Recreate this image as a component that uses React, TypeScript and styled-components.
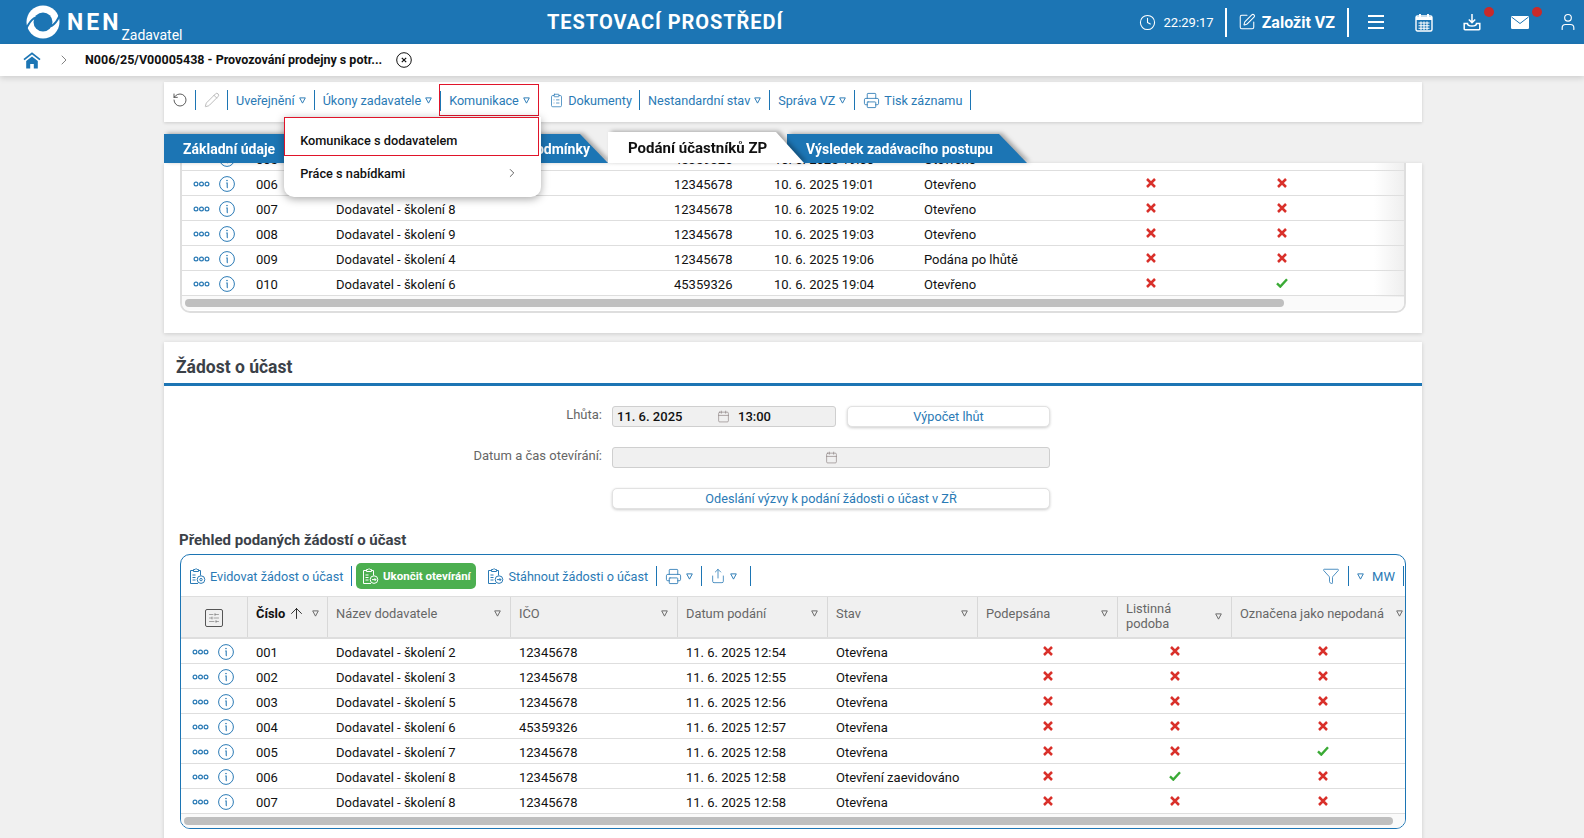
import React from 'react';
import styled, { createGlobalStyle } from 'styled-components';
import {
  ArrowUp,
  Calendar,
  ChevronRight,
  ClipboardList,
  Clock,
  Funnel,
  Pencil,
  Printer,
  RotateCcw,
  Share,
  SlidersHorizontal,
  SquarePen,
  User,
} from 'lucide-react';

const BLUE = '#1c75b4';
const LINK = '#2a7ab5';

const GlobalStyle = createGlobalStyle`
  html, body {
    margin: 0;
    padding: 0;
    height: 100%;
    overflow: hidden;
    background: #f0f0f0;
    font-family: Roboto, "Liberation Sans", sans-serif;
    font-size: 13px;
    color: #111;
  }
`;

const Page = styled.div`
  width: 1584px;
  height: 838px;
  overflow: hidden;
`;

const Header = styled.header`
  height: 44px;
  background: ${BLUE};
  color: #fff;
  display: flex;
  align-items: center;
`;

const Brand = styled.div`
  width: 547px;
  padding-left: 26px;
  box-sizing: border-box;
  display: flex;
  align-items: center;
`;

const BrandName = styled.span`
  margin-left: 7px;
  font-size: 23px;
  font-weight: 700;
  letter-spacing: 3px;
`;

const BrandRole = styled.span`
  font-size: 14px;
  margin: 25px 0 0 0;
`;

const EnvTitle = styled.div`
  font-size: 20px;
  font-weight: 700;
  letter-spacing: 0.95px;
`;

const HeaderRight = styled.div`
  margin-left: auto;
  padding-right: 4px;
  display: flex;
  align-items: center;
`;

const Time = styled.span`
  font-size: 13px;
  margin-left: 8px;
`;

const HeaderSep = styled.span<{ $side?: number }>`
  width: 2px;
  height: 29px;
  background: #fff;
  margin: 0 ${(p) => p.$side ?? 12}px;
`;

const CreateLabel = styled.span`
  font-size: 16px;
  font-weight: 700;
  margin-left: 6px;
`;

const HeaderIcons = styled.div`
  display: flex;
  gap: 24px;
  margin-left: 3px;
`;

const HeaderIcon = styled.span`
  position: relative;
  width: 24px;
  height: 24px;
  display: flex;
  align-items: center;
  justify-content: center;
`;

const Burger = styled.span`
  width: 16px;
  height: 14px;
  border-top: 2px solid #fff;
  border-bottom: 2px solid #fff;
  box-sizing: border-box;
  position: relative;
  &::after {
    content: '';
    position: absolute;
    left: 0;
    right: 0;
    top: 4px;
    height: 2px;
    background: #fff;
  }
`;

const Badge = styled.span`
  position: absolute;
  top: -3px;
  right: -10px;
  width: 10px;
  height: 10px;
  border-radius: 50%;
  background: #c92a2a;
`;

const Crumbs = styled.nav`
  position: relative;
  height: 32px;
  background: #fff;
  box-shadow: 0 2px 6px rgba(0, 0, 0, 0.15);
  display: flex;
  align-items: center;
  padding-left: 23px;
`;

const CrumbChevron = styled(ChevronRight)`
  margin-left: 15px;
`;

const CrumbText = styled.span`
  font-weight: 700;
  font-size: 12.5px;
  margin: 0 14px 2px 13px;
  color: #111;
`;

const Main = styled.main`
  width: 1258px;
  margin: 6px 0 0 164px;
`;

const ToolbarCard = styled.div`
  height: 40px;
  box-sizing: border-box;
  padding: 0 0 4px 8px;
  background: #fff;
  box-shadow: 0 1px 3px rgba(0, 0, 0, 0.15);
  display: flex;
  align-items: center;
`;

const ToolText = styled.span`
  color: ${LINK};
  white-space: nowrap;
  font-size: 12.65px;
`;

const ToolItem = styled.span`
  display: flex;
  align-items: center;
  gap: 4px;
  color: ${LINK};
`;

const IconOnly = styled(ToolItem)`
  margin-right: -1px;
`;

const ToolSep = styled.span<{ $before?: number; $after?: number }>`
  width: 1px;
  height: 20px;
  background: ${BLUE};
  margin: 0 ${(p) => p.$after ?? 8}px 0 ${(p) => p.$before ?? 8}px;
  flex: none;
`;

const MenuAnchor = styled.span`
  position: relative;
  height: 32px;
  width: 100px;
  margin: 0 10px 0 7px;
  box-sizing: border-box;
  border: 1px solid #e0142a;
  padding-left: 9px;
  display: flex;
  align-items: center;
  gap: 4px;
  color: ${LINK};
  &::before {
    content: '';
    position: absolute;
    left: 0;
    top: 6px;
    height: 20px;
    width: 1px;
    background: ${BLUE};
  }
`;

const DropMenu = styled.div`
  position: absolute;
  z-index: 20;
  top: 32px;
  left: -156px;
  width: 257px;
  height: 80px;
  background: #fff;
  border-radius: 0 0 10px 10px;
  box-shadow: 0 2px 8px rgba(0, 0, 0, 0.35);
  color: #111;
  font-weight: 500;
  font-size: 12.75px;
`;

const DropItem = styled.div<{ $marked?: boolean }>`
  height: ${(p) => (p.$marked ? '39px' : '34px')};
  width: 255px;
  box-sizing: border-box;
  padding: ${(p) => (p.$marked ? '15px' : '0')} 19px 0 15px;
  border: 1px solid ${(p) => (p.$marked ? '#e0142a' : 'transparent')};
  display: flex;
  align-items: ${(p) => (p.$marked ? 'flex-start' : 'center')};
  justify-content: space-between;
`;

const Tabs = styled.div`
  height: 29px;
  margin-top: 12px;
  display: flex;
  align-items: flex-end;
`;

const TabShell = styled.div<{ $width: number; $overlap?: number; $layer: number }>`
  position: relative;
  z-index: ${(p) => p.$layer};
  width: ${(p) => p.$width}px;
  margin-left: ${(p) => -(p.$overlap ?? 0)}px;
  flex: none;
  filter: drop-shadow(3px -1px 2px rgba(0, 0, 0, 0.3));
`;

const TabFace = styled.div<{ $active?: boolean; $align?: string; $pad: string }>`
  height: ${(p) => (p.$active ? '31px' : '29px')};
  background: ${(p) => (p.$active ? '#fff' : BLUE)};
  color: ${(p) => (p.$active ? '#111' : '#fff')};
  font-size: ${(p) => (p.$active ? '15px' : '14px')};
  font-weight: 700;
  box-sizing: border-box;
  padding: ${(p) => p.$pad};
  display: flex;
  align-items: center;
  justify-content: ${(p) => p.$align ?? 'flex-start'};
  white-space: nowrap;
  clip-path: polygon(0 0, calc(100% - 28px) 0, 100% 100%, 0 100%);
`;

const Card = styled.section`
  background: #fff;
  box-shadow: 0 1px 4px rgba(0, 0, 0, 0.15);
`;

const TopCard = styled(Card)`
  height: 170px;
  padding: 0 16px;
  box-sizing: border-box;
`;

const TopTable = styled.div`
  position: relative;
  width: 1226px;
  height: 150px;
  box-sizing: border-box;
  border: 2px solid #dedede;
  border-top: none;
  border-radius: 0 0 10px 10px;
  overflow: hidden;
`;

const RowsWindow = styled.div`
  height: 133px;
  overflow: hidden;
  display: flex;
  flex-direction: column;
  justify-content: flex-end;
`;

const FadeEdge = styled.div`
  position: absolute;
  top: 0;
  right: 0;
  bottom: 14px;
  width: 30px;
  background: linear-gradient(to right, rgba(225, 225, 225, 0), rgba(225, 225, 225, 0.55));
`;

const ScrollStrip = styled.div`
  height: 14px;
  padding: 3px;
  box-sizing: border-box;
  background: #fafafa;
`;

const ScrollThumb = styled.div<{ $width: number }>`
  width: ${(p) => p.$width}px;
  height: 8px;
  border-radius: 4px;
  background: #bfbfbf;
`;

const Row = styled.div<{ $cols: string }>`
  flex: none;
  height: 25px;
  box-sizing: border-box;
  border-bottom: 1px solid #dedede;
  display: grid;
  grid-template-columns: ${(p) => p.$cols};
  align-items: center;
`;

const Cell = styled.div`
  padding: 3px 0 0 8px;
  white-space: nowrap;
`;

const MarkCell = styled.div<{ $shift?: number }>`
  padding-left: ${(p) => p.$shift ?? 0}px;
  display: flex;
  justify-content: center;
`;

const ActionCell = styled.div`
  display: flex;
  align-items: center;
  gap: 9px;
  padding: 1px 0 0 11px;
  color: ${LINK};
`;

const SectionCard = styled(Card)`
  margin-top: 9px;
  height: 600px;
`;

const SectionTitle = styled.h2`
  margin: 0;
  height: 41px;
  padding: 13px 0 0 12px;
  box-sizing: border-box;
  font-size: 17.5px;
  line-height: 24px;
  font-weight: 700;
  color: #3b4148;
`;

const SectionRule = styled.div`
  height: 3px;
  background: ${BLUE};
`;

const FormGrid = styled.div`
  display: grid;
  grid-template-columns: 438px 438px;
  column-gap: 10px;
  row-gap: 20px;
  margin-top: 20px;
`;

const FormLabel = styled.label`
  text-align: right;
  color: #666;
  line-height: 18px;
`;

const FieldLine = styled.div`
  display: flex;
  justify-content: space-between;
  height: 21px;
`;

const Input = styled.div<{ $width?: number; $center?: boolean }>`
  width: ${(p) => (p.$width ? `${p.$width}px` : '100%')};
  box-sizing: border-box;
  background: #f0f0f0;
  border: 1px solid #cfcfcf;
  border-radius: 3px;
  display: flex;
  align-items: center;
  justify-content: ${(p) => (p.$center ? 'center' : 'flex-start')};
  color: #8a7f7f;
  font-weight: 500;
`;

const InputValue = styled.span<{ $width?: number; $pad: number }>`
  color: #111;
  width: ${(p) => (p.$width ? `${p.$width}px` : 'auto')};
  padding-left: ${(p) => p.$pad}px;
  box-sizing: border-box;
`;

const GhostButton = styled.div<{ $width?: number }>`
  width: ${(p) => (p.$width ? `${p.$width}px` : '100%')};
  height: 21px;
  box-sizing: border-box;
  background: #fff;
  border: 1px solid #e2e2e2;
  border-radius: 5px;
  box-shadow: 0 1px 3px rgba(0, 0, 0, 0.2);
  color: ${LINK};
  font-size: 12.7px;
  display: flex;
  align-items: center;
  justify-content: center;
`;

const ListTitle = styled.h3`
  margin: 21px 0 0 15px;
  height: 24px;
  font-size: 15px;
  line-height: 20px;
  font-weight: 700;
  color: #3b4148;
`;

const ListBox = styled.div`
  width: 1226px;
  height: 275px;
  margin-left: 16px;
  box-sizing: border-box;
  border: 1.5px solid ${BLUE};
  border-radius: 10px;
  overflow: hidden;
`;

const ListToolbar = styled.div`
  height: 41px;
  box-sizing: border-box;
  padding: 1px 0 0 8px;
  display: flex;
  align-items: center;
`;

const PushRight = styled.div`
  margin-left: auto;
  display: flex;
  align-items: center;
  color: ${LINK};
`;

const MwLabel = styled(ToolText)`
  margin-left: 8px;
  font-size: 13px;
`;

const GreenButton = styled.span`
  height: 26px;
  width: 120px;
  margin-left: -4px;
  margin-right: 11px;
  border-radius: 5px;
  background: #4caf50;
  color: #fff;
  font-weight: 700;
  font-size: 11.5px;
  display: flex;
  align-items: center;
  justify-content: center;
  gap: 4px;
  flex: none;
`;

const HeadRow = styled.div<{ $cols: string }>`
  height: 43px;
  box-sizing: border-box;
  background: #f0f0f0;
  border-top: 1px solid #dedede;
  border-bottom: 2px solid #dedede;
  display: grid;
  grid-template-columns: ${(p) => p.$cols};
`;

const HeadCell = styled.div<{ $sorted?: boolean; $twoLines?: boolean }>`
  position: relative;
  box-sizing: border-box;
  border-right: 1px solid #d8d8d8;
  padding: ${(p) => (p.$twoLines ? '4px' : '9px')} 18px 0 8px;
  color: ${(p) => (p.$sorted ? '#111' : '#666')};
  font-weight: ${(p) => (p.$sorted ? 700 : 400)};
  font-size: 12.85px;
  line-height: 15px;
  display: flex;
  align-items: flex-start;
  &:last-child {
    border-right: none;
  }
`;

const SettingsCell = styled(HeadCell)`
  padding: 12px 0 0 0;
  justify-content: center;
  color: #555;
`;

const SortArrow = styled(ArrowUp)`
  margin: -1px 0 0 3px;
`;

const HeadCaret = styled.span<{ $low?: boolean; $inset?: number }>`
  position: absolute;
  right: ${(p) => p.$inset ?? 9}px;
  top: ${(p) => (p.$low ? '16px' : '13px')};
  color: #666;
  line-height: 0;
`;

const SettingsBox = styled.span`
  width: 16px;
  height: 16px;
  border: 1px solid #555;
  border-radius: 2px;
  display: flex;
  align-items: center;
  justify-content: center;
`;

const Caret = () => (
  <svg width="7" height="7" viewBox="0 0 8 8" fill="none" stroke="currentColor" strokeWidth="1.1">
    <path d="M0.8 1h6.4L4 7z" />
  </svg>
);

const NenLogo = () => (
  <svg width="34" height="34" viewBox="0 0 34 34">
    <circle cx="17" cy="17" r="16.5" fill="#fff" />
    <circle cx="17" cy="17" r="9.5" fill={BLUE} />
    <path d="M34 9Q31.5 17 25 21.5M0 25Q2.5 17 9 12.5" fill="none" stroke={BLUE} strokeWidth="2" />
  </svg>
);

const HomeIcon = () => (
  <svg width="18" height="17" viewBox="0 0 18 17">
    <path d="M1 7.6 9 1.4l8 6.2" fill="none" stroke={BLUE} strokeWidth="1.8" />
    <path d="M3.2 9 9 4.6 14.8 9v7.6h-4v-4.6H7.2v4.6h-4z" fill={BLUE} />
  </svg>
);

const CloseCircle = () => (
  <svg width="16" height="16" viewBox="0 0 16 16" fill="none" stroke="#111" strokeWidth="1">
    <circle cx="8" cy="8" r="7.3" />
    <path d="M5.8 5.8l4.4 4.4M10.2 5.8l-4.4 4.4" strokeWidth="1.2" />
  </svg>
);

const CalendarIcon = () => (
  <svg width="18" height="19" viewBox="0 0 18 19" fill="none" stroke="#fff">
    <rect x="1" y="3" width="16" height="15" rx="1.5" strokeWidth="1.4" />
    <path d="M1 5.5h16" strokeWidth="3" />
    <path d="M5 1v3M13 1v3" strokeWidth="2" />
    <path d="M3.5 10h11M3.5 12.7h11M3.5 15.3h11M6 8.5v8.5M9 8.5v8.5M12 8.5v8.5" strokeWidth="1.1" />
  </svg>
);

const InboxIcon = () => (
  <svg width="18" height="18" viewBox="0 0 18 18" fill="none" stroke="#fff" strokeWidth="1.5">
    <path d="M9 1v8M5.8 6.5 9 9.6l3.2-3.1" />
    <path d="M4.5 10.5H1.2v5.5a.8.8 0 0 0 .8.8h14a.8.8 0 0 0 .8-.8v-5.5h-3.3c0 2-2 2.5-4.5 2.5s-4.5-.5-4.5-2.5z" />
  </svg>
);

const MailIcon = () => (
  <svg width="18" height="13" viewBox="0 0 18 13">
    <rect width="18" height="13" rx="1.2" fill="#fff" />
    <path d="M0.5 1 9 7.5 17.5 1" fill="none" stroke={BLUE} strokeWidth="1" />
  </svg>
);

const DotsIcon = () => (
  <svg width="17" height="6" viewBox="0 0 17 6" fill="none" stroke="currentColor" strokeWidth="1.2">
    <circle cx="3" cy="3" r="1.9" />
    <circle cx="8.5" cy="3" r="1.9" />
    <circle cx="14" cy="3" r="1.9" />
  </svg>
);

const InfoIcon = () => (
  <svg width="16" height="16" viewBox="0 0 16 16" fill="none" stroke="currentColor">
    <circle cx="8" cy="8" r="7.4" strokeWidth="1" />
    <path d="M7.2 7h1v4.2c0 .4.2.6.6.6" strokeWidth="1.1" />
    <circle cx="8" cy="4.6" r="0.4" strokeWidth="1" />
  </svg>
);

const NoMark = () => (
  <svg width="10" height="10" viewBox="0 0 10 10" fill="none" stroke="#d9302a" strokeWidth="2.5">
    <path d="M1 1l8 8M9 1l-8 8" />
  </svg>
);

const YesMark = () => (
  <svg width="12" height="10" viewBox="0 0 12 10" fill="none" stroke="#3aaa35" strokeWidth="2.4">
    <path d="M1 5.4 4.3 8.6 11 1.2" />
  </svg>
);

const GearDoc = ({ color = 'currentColor', badge = 'gear' }: { color?: string; badge?: 'gear' | 'arrow' }) => (
  <svg width="17" height="18" viewBox="0 0 17 18" fill="none" stroke={color} strokeWidth="1">
    <path d="M9 16.5H1.5v-13h3M9 3.5h2.5v5" />
    <path d="M4.5 4.5v-2h1.5a1.2 1.2 0 0 1 2.2 0h1.3v2z" />
    <path d="M3.5 8h3M3.5 10.5h3M3.5 13h3" />
    <circle cx="12" cy="12.6" r="3.8" />
    {badge === 'gear' ? (
      <circle cx="12" cy="12.6" r="1.2" />
    ) : (
      <path d="M10 12.6h4M12.6 11.2l1.4 1.4-1.4 1.4" />
    )}
  </svg>
);

const TOP_COLS = '66px 80px 338px 100px 150px 170px 130px 132px 1fr';
const LIST_COLS = '67px 80px 183px 167px 150px 150px 140px 114px 1fr';

type TopRow = { no: string; name: string; ico: string; at: string; state: string; a: boolean; b: boolean };

const topRows: TopRow[] = [
  { no: '005', name: 'Dodavatel - školení 7', ico: '45359326', at: '10. 6. 2025 19:00', state: 'Otevřeno', a: false, b: false },
  { no: '006', name: 'Dodavatel - školení 1', ico: '12345678', at: '10. 6. 2025 19:01', state: 'Otevřeno', a: false, b: false },
  { no: '007', name: 'Dodavatel - školení 8', ico: '12345678', at: '10. 6. 2025 19:02', state: 'Otevřeno', a: false, b: false },
  { no: '008', name: 'Dodavatel - školení 9', ico: '12345678', at: '10. 6. 2025 19:03', state: 'Otevřeno', a: false, b: false },
  { no: '009', name: 'Dodavatel - školení 4', ico: '12345678', at: '10. 6. 2025 19:06', state: 'Podána po lhůtě', a: false, b: false },
  { no: '010', name: 'Dodavatel - školení 6', ico: '45359326', at: '10. 6. 2025 19:04', state: 'Otevřeno', a: false, b: true },
];

type ListRow = { no: string; name: string; ico: string; at: string; state: string; signed: boolean; paper: boolean; unfiled: boolean };

const listRows: ListRow[] = [
  { no: '001', name: 'Dodavatel - školení 2', ico: '12345678', at: '11. 6. 2025 12:54', state: 'Otevřena', signed: false, paper: false, unfiled: false },
  { no: '002', name: 'Dodavatel - školení 3', ico: '12345678', at: '11. 6. 2025 12:55', state: 'Otevřena', signed: false, paper: false, unfiled: false },
  { no: '003', name: 'Dodavatel - školení 5', ico: '12345678', at: '11. 6. 2025 12:56', state: 'Otevřena', signed: false, paper: false, unfiled: false },
  { no: '004', name: 'Dodavatel - školení 6', ico: '45359326', at: '11. 6. 2025 12:57', state: 'Otevřena', signed: false, paper: false, unfiled: false },
  { no: '005', name: 'Dodavatel - školení 7', ico: '12345678', at: '11. 6. 2025 12:58', state: 'Otevřena', signed: false, paper: false, unfiled: true },
  { no: '006', name: 'Dodavatel - školení 8', ico: '12345678', at: '11. 6. 2025 12:58', state: 'Otevření zaevidováno', signed: false, paper: true, unfiled: false },
  { no: '007', name: 'Dodavatel - školení 8', ico: '12345678', at: '11. 6. 2025 12:58', state: 'Otevřena', signed: false, paper: false, unfiled: false },
];

const heads = ['Název dodavatele', 'IČO', 'Datum podání', 'Stav', 'Podepsána', 'Listinná podoba', 'Označena jako nepodaná'];

const Mark = ({ yes }: { yes: boolean }) => (yes ? <YesMark /> : <NoMark />);

const Actions = () => (
  <ActionCell>
    <DotsIcon />
    <InfoIcon />
  </ActionCell>
);

const App: React.FC = () => {
  return (
    <Page>
      <GlobalStyle />
      <Header>
        <Brand>
          <NenLogo />
          <BrandName>NEN</BrandName>
          <BrandRole>Zadavatel</BrandRole>
        </Brand>
        <EnvTitle>TESTOVACÍ PROSTŘEDÍ</EnvTitle>
        <HeaderRight>
          <Clock size={17} strokeWidth={1.5} />
          <Time>22:29:17</Time>
          <HeaderSep $side={11} />
          <SquarePen size={18} strokeWidth={1.4} />
          <CreateLabel>Založit VZ</CreateLabel>
          <HeaderSep />
          <HeaderIcons>
            <HeaderIcon>
              <Burger />
            </HeaderIcon>
            <HeaderIcon>
              <CalendarIcon />
            </HeaderIcon>
            <HeaderIcon>
              <InboxIcon />
              <Badge />
            </HeaderIcon>
            <HeaderIcon>
              <MailIcon />
              <Badge />
            </HeaderIcon>
            <HeaderIcon>
              <User size={20} strokeWidth={1.4} />
            </HeaderIcon>
          </HeaderIcons>
        </HeaderRight>
      </Header>

      <Crumbs>
        <HomeIcon />
        <CrumbChevron size={16} strokeWidth={1} color="#444" />
        <CrumbText>N006/25/V00005438 - Provozování prodejny s potr...</CrumbText>
        <CloseCircle />
      </Crumbs>

      <Main>
        <ToolbarCard>
          <IconOnly>
            <RotateCcw size={16} strokeWidth={1.2} color="#333" />
          </IconOnly>
          <ToolSep />
          <IconOnly>
            <Pencil size={16} strokeWidth={1} color="#9a9a9a" />
          </IconOnly>
          <ToolSep />
          <ToolItem>
            <ToolText>Uveřejnění</ToolText>
            <Caret />
          </ToolItem>
          <ToolSep />
          <ToolItem>
            <ToolText>Úkony zadavatele</ToolText>
            <Caret />
          </ToolItem>
          <MenuAnchor>
            <ToolText>Komunikace</ToolText>
            <Caret />
            <DropMenu>
              <DropItem $marked>Komunikace s dodavatelem</DropItem>
              <DropItem>
                Práce s nabídkami
                <ChevronRight size={14} strokeWidth={1.3} color="#333" />
              </DropItem>
            </DropMenu>
          </MenuAnchor>
          <ToolItem>
            <ClipboardList size={15} strokeWidth={1.2} />
            <ToolText>Dokumenty</ToolText>
          </ToolItem>
          <ToolSep $before={7} />
          <ToolItem>
            <ToolText>Nestandardní stav</ToolText>
            <Caret />
          </ToolItem>
          <ToolSep />
          <ToolItem>
            <ToolText>Správa VZ</ToolText>
            <Caret />
          </ToolItem>
          <ToolSep />
          <ToolItem>
            <Printer size={17} strokeWidth={1.2} />
            <ToolText>Tisk záznamu</ToolText>
          </ToolItem>
          <ToolSep />
        </ToolbarCard>

        <Tabs>
          <TabShell $width={160} $layer={1}>
            <TabFace $pad="0 0 0 19px">Základní údaje</TabFace>
          </TabShell>
          <TabShell $width={284} $layer={2}>
            <TabFace $pad="0 18px 0 0" $align="flex-end">Zadávací podmínky</TabFace>
          </TabShell>
          <TabShell $width={196} $layer={4}>
            <TabFace $active $pad="0 0 0 20px">Podání účastníků ZP</TabFace>
          </TabShell>
          <TabShell $width={240} $overlap={17} $layer={3}>
            <TabFace $pad="0 0 0 19px">Výsledek zadávacího postupu</TabFace>
          </TabShell>
        </Tabs>

        <TopCard>
          <TopTable>
            <RowsWindow>
              {topRows.map((r) => (
                <Row key={r.no} $cols={TOP_COLS}>
                  <Actions />
                  <Cell>{r.no}</Cell>
                  <Cell>{r.name}</Cell>
                  <Cell>{r.ico}</Cell>
                  <Cell>{r.at}</Cell>
                  <Cell>{r.state}</Cell>
                  <MarkCell>
                    <Mark yes={r.a} />
                  </MarkCell>
                  <MarkCell>
                    <Mark yes={r.b} />
                  </MarkCell>
                </Row>
              ))}
            </RowsWindow>
            <FadeEdge />
            <ScrollStrip>
              <ScrollThumb $width={1099} />
            </ScrollStrip>
          </TopTable>
        </TopCard>

        <SectionCard>
          <SectionTitle>Žádost o účast</SectionTitle>
          <SectionRule />

          <FormGrid>
            <FormLabel>Lhůta:</FormLabel>
            <FieldLine>
              <Input $width={224}>
                <InputValue $width={104} $pad={4}>11. 6. 2025</InputValue>
                <Calendar size={13} strokeWidth={1.2} />
                <InputValue $pad={8}>13:00</InputValue>
              </Input>
              <GhostButton $width={203}>Výpočet lhůt</GhostButton>
            </FieldLine>
            <FormLabel>Datum a čas otevírání:</FormLabel>
            <FieldLine>
              <Input $center>
                <Calendar size={13} strokeWidth={1.2} />
              </Input>
            </FieldLine>
            <span />
            <FieldLine>
              <GhostButton>Odeslání výzvy k podání žádosti o účast v ZŘ</GhostButton>
            </FieldLine>
          </FormGrid>

          <ListTitle>Přehled podaných žádostí o účast</ListTitle>
          <ListBox>
            <ListToolbar>
              <ToolItem>
                <GearDoc />
                <ToolText>Evidovat žádost o účast</ToolText>
              </ToolItem>
              <ToolSep />
              <GreenButton>
                <GearDoc color="#fff" badge="arrow" />
                Ukončit otevírání
              </GreenButton>
              <ToolItem>
                <GearDoc badge="arrow" />
                <ToolText>Stáhnout žádosti o účast</ToolText>
              </ToolItem>
              <ToolSep />
              <ToolItem>
                <Printer size={17} strokeWidth={1.2} />
                <Caret />
              </ToolItem>
              <ToolSep />
              <ToolItem>
                <Share size={16} strokeWidth={1.2} />
                <Caret />
              </ToolItem>
              <ToolSep $before={13} />
              <PushRight>
                <Funnel size={18} strokeWidth={1.1} />
                <ToolSep />
                <Caret />
                <MwLabel>MW</MwLabel>
                <ToolSep $after={1} />
              </PushRight>
            </ListToolbar>

            <HeadRow $cols={LIST_COLS}>
              <SettingsCell>
                <SettingsBox>
                  <SlidersHorizontal size={12} strokeWidth={1} />
                </SettingsBox>
              </SettingsCell>
              <HeadCell $sorted>
                Číslo
                <SortArrow size={17} strokeWidth={1.2} />
                <HeadCaret $inset={8}>
                  <Caret />
                </HeadCaret>
              </HeadCell>
              {heads.map((h) => (
                <HeadCell key={h} $twoLines={h === 'Listinná podoba'}>
                  {h}
                  <HeadCaret $low={h === 'Listinná podoba'} $inset={h === 'Označena jako nepodaná' ? 2 : undefined}>
                    <Caret />
                  </HeadCaret>
                </HeadCell>
              ))}
            </HeadRow>

            {listRows.map((r) => (
              <Row key={r.no} $cols={LIST_COLS}>
                <Actions />
                <Cell>{r.no}</Cell>
                <Cell>{r.name}</Cell>
                <Cell>{r.ico}</Cell>
                <Cell>{r.at}</Cell>
                <Cell>{r.state}</Cell>
                <MarkCell>
                  <Mark yes={r.signed} />
                </MarkCell>
                <MarkCell>
                  <Mark yes={r.paper} />
                </MarkCell>
                <MarkCell $shift={8}>
                  <Mark yes={r.unfiled} />
                </MarkCell>
              </Row>
            ))}
            <ScrollStrip>
              <ScrollThumb $width={1209} />
            </ScrollStrip>
          </ListBox>
        </SectionCard>
      </Main>
    </Page>
  );
};

export default App;
